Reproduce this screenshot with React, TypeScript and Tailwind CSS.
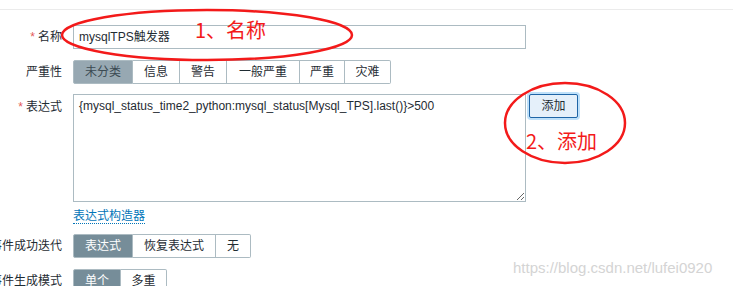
const FONT = { fontFamily: "'Liberation Sans', Arial, 'Noto Sans CJK SC', sans-serif" };

const SEVERITY = ['未分类', '信息', '警告', '一般严重', '严重', '灾难'];

function Label({ text, required }: { text: string; required?: boolean }) {
  return (
    <div className="flex w-[62px] shrink-0 justify-end whitespace-nowrap text-[12px] text-[#1f2c33]">
      <span className="shrink-0">
        {required ? <span className="mr-[3px] text-[#e45959]">*</span> : null}
        {text}
      </span>
    </div>
  );
}

function Segmented({
  items,
  widths,
  active,
  variant,
}: {
  items: string[];
  widths: number[];
  active: number;
  variant: 'muted' | 'dark';
}) {
  return (
    <div className="flex h-[24px] text-[12px]">
      {items.map((item, i) => {
        const isActive = i === active;
        return (
          <div
            key={item}
            className={`flex items-center justify-center border-y border-r border-[#acbbc2] ${
              i === 0 ? 'rounded-l-[2px] border-l' : ''
            } ${i === items.length - 1 ? 'rounded-r-[2px]' : ''} ${
              isActive
                ? variant === 'dark'
                  ? 'border-[#768d99] bg-[#768d99] text-white'
                  : 'bg-[#97a8b2] text-[#3b4a52]'
                : 'bg-white text-[#1f2c33]'
            }`}
            style={{ width: widths[i] }}
          >
            {item}
          </div>
        );
      })}
    </div>
  );
}

export default function App() {
  return (
    <div className="relative h-[286px] w-[733px] overflow-hidden bg-white" style={FONT}>
      <div className="h-[10px] border-b border-[#ebebeb]" />

      <div className="flex flex-col">
        <div className="mt-[15px] flex items-center gap-[11px]">
          <Label text="名称" required />
          <div className="flex h-[24px] w-[453px] items-center border border-[#acbbc2] px-[5px] text-[12px] text-[#1f2c33]">
            mysqlTPS触发器
          </div>
        </div>

        <div className="mt-[11px] flex items-center gap-[11px]">
          <Label text="严重性" />
          <Segmented items={SEVERITY} widths={[60, 47, 47, 73, 45, 46]} active={0} variant="muted" />
        </div>

        <div className="mt-[10px] flex items-start gap-[11px]">
          <div className="pt-[4px]">
            <Label text="表达式" required />
          </div>
          <textarea
            readOnly
            defaultValue="{mysql_status_time2_python:mysql_status[Mysql_TPS].last()}>500"
            className="h-[108px] w-[453px] resize border border-[#acbbc2] px-[5px] pt-[3px] text-[12px] leading-[16px] text-[#1f2c33] outline-none"
            style={FONT}
          />
          <button className="-ml-[8px] h-[24px] w-[49px] rounded-[2px] border border-[#1f65a6] bg-[#e5f0fa] text-[12px] text-[#1f2c33] shadow-[0_0_0_2px_rgba(0,136,235,0.25)]">
            添加
          </button>
        </div>

        <div className="mt-[7px] flex gap-[11px]">
          <div className="w-[62px] shrink-0" />
          <span className="border-b border-dotted border-[#0275b8] text-[12px] leading-[14px] text-[#0275b8]">
            表达式构造器
          </span>
        </div>

        <div className="mt-[10px] flex items-center gap-[11px]">
          <Label text="事件成功迭代" />
          <Segmented items={['表达式', '恢复表达式', '无']} widths={[60, 83, 35]} active={0} variant="dark" />
        </div>

        <div className="mt-[11px] flex items-center gap-[11px]">
          <Label text="事件生成模式" />
          <Segmented items={['单个', '多重']} widths={[48, 46]} active={0} variant="dark" />
        </div>
      </div>

      {/* red annotations */}
      <svg className="pointer-events-none absolute left-0 top-0" width="733" height="286">
        <ellipse cx="207" cy="35" rx="145" ry="25" fill="none" stroke="#f31a1a" strokeWidth="2.5" />
        <ellipse cx="565" cy="123" rx="60" ry="40" fill="none" stroke="#f31a1a" strokeWidth="2.5" />
      </svg>
      <span
        className="absolute left-[195px] top-[18px] text-[20px] leading-[24px] text-[#f31a1a]"
        style={{ fontFamily: "'Noto Sans CJK SC', sans-serif" }}
      >
        1、名称
      </span>
      <span
        className="absolute left-[526px] top-[129px] text-[20px] leading-[24px] text-[#f31a1a]"
        style={{ fontFamily: "'Noto Sans CJK SC', sans-serif" }}
      >
        2、添加
      </span>

      <span className="absolute left-[513px] top-[257px] text-[15px] text-[#d4d4d4]">
        https://blog.csdn.net/lufei0920
      </span>
    </div>
  );
}
